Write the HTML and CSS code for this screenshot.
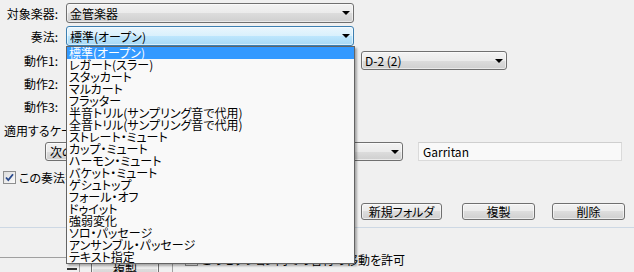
FILE: index.html
```html
<!DOCTYPE html>
<html lang="ja">
  <head>
    <meta charset="UTF-8" />
    <title>奏法の選択</title>
    <link rel="stylesheet" href="styles.css">
  </head>
  <body>
    <div class="dialog">
      <!-- instrument / articulation -->
      <div class="row row-1">
        <span class="label">対象楽器:</span>
        <div class="combo combo-main"><span>金管楽器</span></div>
      </div>
      <div class="row row-2">
        <span class="label">奏法:</span>
        <div class="combo combo-main focused"><span>標準(オープン)</span></div>
      </div>

      <!-- actions -->
      <div class="row row-act first">
        <span class="label">動作1:</span>
        <div class="combo combo-main"><span></span></div>
        <div class="combo combo-action"><span>D-2 (2)</span></div>
      </div>
      <div class="row row-act">
        <span class="label">動作2:</span>
        <div class="combo combo-main"><span></span></div>
      </div>
      <div class="row row-act">
        <span class="label">動作3:</span>
        <div class="combo combo-main"><span></span></div>
      </div>

      <div class="row row-case">
        <span class="label-wide">適用するケース:</span>
      </div>
      <div class="row row-lib">
        <button class="btn btn-next">次の音源</button>
        <div class="combo combo-lib"><span></span></div>
        <div class="text-input">Garritan</div>
      </div>

      <div class="row row-check">
        <span class="checkbox checked">
          <svg width="13" height="13" viewBox="0 0 13 13">
            <path d="M3 6.5l2.3 2.6L10 3.2" fill="none" stroke="#2a4a8c" stroke-width="1.8" />
          </svg>
        </span>
        <span class="check-text">この奏法を既定にする</span>
      </div>

      <div class="row row-buttons">
        <button class="btn btn-folder">新規フォルダ</button>
        <button class="btn btn-copy">複製</button>
        <button class="btn btn-delete">削除</button>
      </div>

      <div class="separator"></div>

      <div class="bottom">
        <div class="bottom-left">
          <span class="dash"></span>
          <span class="divider"></span>
          <button class="btn btn-small">複製</button>
        </div>
        <div class="bottom-right">
          <span class="checkbox"></span>
          <span class="bottom-text">このセクション内での音符の移動を許可</span>
        </div>
      </div>

      <!-- open dropdown of the 奏法 combo -->
      <ul class="droplist">
        <li class="selected">標準(オープン)</li>
        <li>レガート(スラー)</li>
        <li>スタッカート</li>
        <li>マルカート</li>
        <li>フラッター</li>
        <li>半音トリル(サンプリング音で代用)</li>
        <li>全音トリル(サンプリング音で代用)</li>
        <li>ストレート・ミュート</li>
        <li>カップ・ミュート</li>
        <li>ハーモン・ミュート</li>
        <li>バケット・ミュート</li>
        <li>ゲシュトップ</li>
        <li>フォール・オフ</li>
        <li>ドゥイット</li>
        <li>強弱変化</li>
        <li>ソロ・パッセージ</li>
        <li>アンサンブル・パッセージ</li>
        <li>テキスト指定</li>
      </ul>
    </div>
  </body>
</html>
```

FILE: styles.css
```css
body {
  margin: 0;
  padding: 0;
  background: #f0f0f0;
  font-family: "Noto Sans CJK JP", sans-serif;
  font-size: 12px;
  font-feature-settings: "palt";
  color: #000;
}

.dialog {
  position: relative;
  width: 634px;
  height: 272px;
  overflow: hidden;
}

.row {
  display: flex;
  align-items: center;
  white-space: nowrap;
}

.label {
  width: 58px;
  text-align: right;
  flex-shrink: 0;
}

.label-wide {
  padding-left: 4px;
}

/* row heights follow the original dialog */
.row-1 {
  height: 20px;
  margin-top: 3px;
}

.row-2 {
  height: 20px;
  margin-top: 3px;
}

.row-act {
  height: 19px;
  margin-top: 4px;
}

.row-act.first {
  margin-top: 5px;
}

.row-case {
  height: 18px;
  margin-top: 5px;
}

.row-lib {
  height: 19px;
  margin-top: 3px;
  padding-left: 45px;
}

.row-check {
  height: 14px;
  margin-top: 9px;
  padding-left: 3px;
}

.row-buttons {
  height: 17px;
  margin-top: 19px;
  padding-left: 361px;
}

/* combo boxes */
.combo {
  box-sizing: border-box;
  display: flex;
  align-items: center;
  height: 20px;
  padding-left: 3px;
  border: 1px solid #707070;
  border-radius: 3px;
  background: linear-gradient(#f3f3f3 0%, #ebebeb 50%, #dddddd 50%, #cfcfcf 100%);
  box-shadow: inset 0 0 0 1px rgba(255, 255, 255, 0.55);
  flex-shrink: 0;
}

.combo::after {
  content: "";
  margin-left: auto;
  margin-right: 3px;
  border-left: 4px solid transparent;
  border-right: 4px solid transparent;
  border-top: 4px solid #000;
}

.combo.focused {
  border-color: #3c7fb1;
  background: linear-gradient(#eaf6fd 0%, #d9f0fc 50%, #bee6fd 50%, #a7d9f5 100%);
}

.combo-main {
  width: 288px;
  margin-left: 8px;
}

.row-act .combo {
  height: 19px;
}

.combo-action {
  width: 146px;
  margin-left: 7px;
}

.combo-lib {
  width: 254px;
  height: 19px;
  margin-left: 4px;
}

.text-input {
  box-sizing: border-box;
  width: 204px;
  height: 19px;
  margin-left: 15px;
  padding-left: 4px;
  line-height: 17px;
  border: 1px solid #dadada;
  border-top-color: #cfcfcf;
  background: #f9f9f9;
}

/* buttons */
.btn {
  box-sizing: border-box;
  height: 17px;
  padding: 0;
  font: inherit;
  font-feature-settings: "palt";
  line-height: 15px;
  color: #000;
  border: 1px solid #707070;
  border-radius: 3px;
  background: linear-gradient(#f2f2f2 0%, #ebebeb 50%, #dddddd 50%, #cfcfcf 100%);
  box-shadow: inset 0 0 0 1px rgba(255, 255, 255, 0.6);
  flex-shrink: 0;
}

.btn-next {
  width: 100px;
  height: 19px;
  text-align: left;
  padding-left: 4px;
}

.btn-folder {
  width: 81px;
}

.btn-copy {
  width: 73px;
  margin-left: 20px;
}

.btn-delete {
  width: 73px;
  margin-left: 17px;
}

/* checkboxes */
.checkbox {
  box-sizing: border-box;
  display: inline-block;
  width: 13px;
  height: 13px;
  border: 1px solid #8e8f8f;
  background: linear-gradient(135deg, #dcdcdc, #fbfbfb);
  flex-shrink: 0;
}

.checkbox svg {
  display: block;
  margin: -1px;
}

.check-text {
  margin-left: 3px;
}

.separator {
  height: 1px;
  margin-top: 7px;
  background: #cdd8e4;
}

/* lower panel, mostly hidden by the dropdown */
.bottom {
  display: flex;
  align-items: flex-start;
  height: 43px;
}

.bottom-left {
  display: flex;
  align-items: flex-start;
  width: 172px;
  height: 20px;
  margin-top: 29px;
  border-top: 1px solid #a0a0a0;
  border-right: 1px solid #a0a0a0;
}

.dash {
  width: 10px;
  height: 2px;
  margin: 10px 0 0 67px;
  background: #333;
}

.divider {
  width: 1px;
  height: 20px;
  margin-left: 2px;
  background: #a0a0a0;
}

.btn-small {
  width: 68px;
  height: 20px;
  margin: 1px 0 0 11px;
  line-height: 20px;
}

.bottom-right {
  display: flex;
  align-items: center;
  height: 13px;
  margin: 25px 0 0 12px;
  white-space: nowrap;
}

.bottom-text {
  margin-left: 3px;
  line-height: 13px;
}

/* the open list of the articulation combo */
.droplist {
  position: absolute;
  left: 66px;
  top: 46px;
  box-sizing: border-box;
  width: 289px;
  margin: 0;
  padding: 0;
  list-style: none;
  border: 1px solid #646464;
  background: #f9f9f9;
  box-shadow: 2px 2px 2px rgba(0, 0, 0, 0.3);
}

.droplist li {
  height: 12px;
  padding-left: 2px;
  line-height: 12px;
  white-space: nowrap;
}

.droplist li.selected {
  background: #3399ff;
  color: #fff;
}
```
